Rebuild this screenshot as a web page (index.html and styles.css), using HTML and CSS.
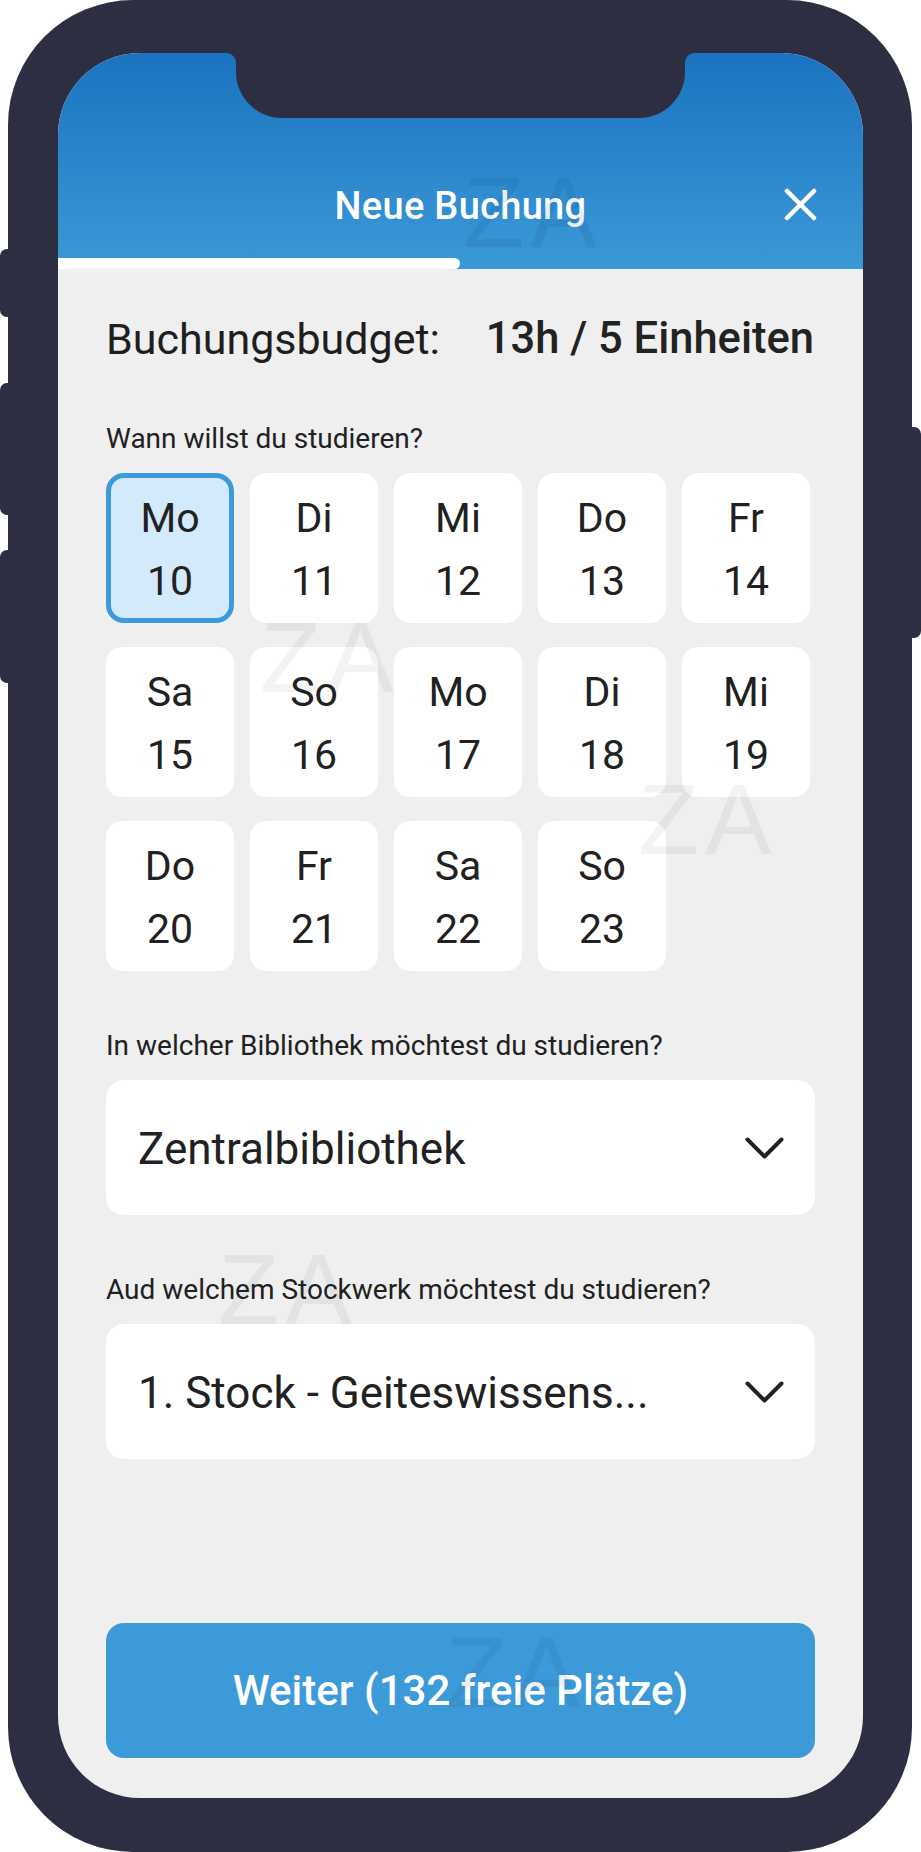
FILE: index.html
```html
<!DOCTYPE html>
<html lang="de">
<head>
<meta charset="utf-8">
<title>Neue Buchung</title>
<link rel="stylesheet" href="styles.css">
</head>
<body>
<div class="stage">
  <div class="device">
    <span class="side-btn side-left mute"></span>
    <span class="side-btn side-left vol-up"></span>
    <span class="side-btn side-left vol-down"></span>
    <span class="side-btn side-right power"></span>
    <div class="screen">
      <div class="notch"></div>
      <header class="header">
        <div class="title-row">
          <h1 class="title">Neue Buchung</h1>
          <svg class="close" viewBox="0 0 33 33" width="33" height="33" aria-label="Schließen">
            <path d="M3 3 L30 30 M30 3 L3 30" stroke="#fff" stroke-width="4.5" stroke-linecap="round" fill="none"/>
          </svg>
        </div>
        <div class="progress"></div>
      </header>
      <main class="content">
        <div class="budget">
          <span>Buchungsbudget:</span>
          <strong>13h / 5 Einheiten</strong>
        </div>
        <p class="label label-first">Wann willst du studieren?</p>
        <div class="days">
          <div class="day selected"><span>Mo</span><span>10</span></div>
          <div class="day"><span>Di</span><span>11</span></div>
          <div class="day"><span>Mi</span><span>12</span></div>
          <div class="day"><span>Do</span><span>13</span></div>
          <div class="day"><span>Fr</span><span>14</span></div>
          <div class="day"><span>Sa</span><span>15</span></div>
          <div class="day"><span>So</span><span>16</span></div>
          <div class="day"><span>Mo</span><span>17</span></div>
          <div class="day"><span>Di</span><span>18</span></div>
          <div class="day"><span>Mi</span><span>19</span></div>
          <div class="day"><span>Do</span><span>20</span></div>
          <div class="day"><span>Fr</span><span>21</span></div>
          <div class="day"><span>Sa</span><span>22</span></div>
          <div class="day"><span>So</span><span>23</span></div>
        </div>
        <p class="label">In welcher Bibliothek möchtest du studieren?</p>
        <div class="select">
          <span>Zentralbibliothek</span>
          <svg class="chevron" viewBox="0 0 39 22" width="39" height="22"><path d="M2.5 2.5 L19.5 19.5 L36.5 2.5" stroke="#222" stroke-width="4" stroke-linecap="round" stroke-linejoin="round" fill="none"/></svg>
        </div>
        <p class="label">Aud welchem Stockwerk möchtest du studieren?</p>
        <div class="select">
          <span>1. Stock - Geiteswissens...</span>
          <svg class="chevron" viewBox="0 0 39 22" width="39" height="22"><path d="M2.5 2.5 L19.5 19.5 L36.5 2.5" stroke="#222" stroke-width="4" stroke-linecap="round" stroke-linejoin="round" fill="none"/></svg>
        </div>
        <button class="cta" type="button">Weiter (132 freie Plätze)</button>
      </main>
      <div class="wm wm-1">ZA</div>
      <div class="wm wm-2">ZA</div>
      <div class="wm wm-3">ZA</div>
      <div class="wm wm-4">ZA</div>
      <div class="wm wm-5">ZA</div>
    </div>
  </div>
</div>
</body>
</html>
```

FILE: styles.css
```css
* { box-sizing: border-box; }

html, body {
  margin: 0;
  padding: 0;
  background: #ffffff;
}

body {
  font-family: Roboto, "Liberation Sans", Arial, sans-serif;
  color: #212121;
}

.stage {
  width: 921px;
  height: 1852px;
  padding-left: 8px;
}

.device {
  position: relative;
  width: 904px;
  height: 1852px;
  padding: 53px 49px 54px 50px;
  background: #2e2e42;
  border-radius: 125px;
}

.side-btn {
  position: absolute;
  width: 16px;
  background: #2e2e42;
}

.side-left {
  left: -8px;
  border-radius: 7px 0 0 7px;
}

.mute { top: 249px; height: 68px; }
.vol-up { top: 383px; height: 132px; }
.vol-down { top: 550px; height: 133px; }

.side-right {
  right: -9px;
  border-radius: 0 7px 7px 0;
}

.power { top: 427px; height: 211px; }

.screen {
  position: relative;
  height: 100%;
  border-radius: 82px;
  overflow: hidden;
  background: #efefef;
  display: flex;
  flex-direction: column;
}

.notch {
  position: absolute;
  top: 0;
  left: 178px;
  width: 449px;
  height: 65px;
  background: #2e2e42;
  border-radius: 0 0 46px 46px;
  z-index: 3;
}

.notch::before,
.notch::after {
  content: "";
  position: absolute;
  top: 0;
  width: 10px;
  height: 10px;
}

.notch::before {
  left: -10px;
  background: radial-gradient(circle at 0 100%, rgba(46,46,66,0) 9.5px, #2e2e42 10.5px);
}

.notch::after {
  right: -10px;
  background: radial-gradient(circle at 100% 100%, rgba(46,46,66,0) 9.5px, #2e2e42 10.5px);
}

/* Header */
.header {
  flex: none;
  height: 216px;
  background: linear-gradient(180deg, #1a73c0 0%, #3b99d7 100%);
  display: flex;
  flex-direction: column;
  justify-content: flex-end;
}

.title-row {
  display: grid;
  grid-template-columns: 1fr auto 1fr;
  align-items: center;
  height: 44px;
  margin-bottom: 30px;
}

.title {
  grid-column: 2;
  margin: 0;
  font-size: 38px;
  line-height: 44px;
  font-weight: 500;
  color: #ffffff;
  letter-spacing: 0.3px;
}

.close {
  grid-column: 3;
  justify-self: end;
  margin-right: 46px;
  margin-top: -3px;
  display: block;
}

.progress {
  width: 402px;
  height: 11px;
  background: #ffffff;
  border-radius: 0 6px 6px 0;
}

/* Content */
.content {
  flex: 1;
  display: flex;
  flex-direction: column;
  padding: 0 48px 40px;
}

.budget {
  margin-top: 45px;
  display: flex;
  justify-content: space-between;
  font-size: 43px;
  line-height: 50px;
  color: #1e1e1e;
}

.budget strong {
  font-weight: 500;
  font-size: 43.5px;
  margin-right: 1px;
  color: #222;
}

.label {
  margin: 58px 0 0;
  font-size: 28px;
  line-height: 34px;
  color: #212121;
}

.days {
  margin-top: 17px;
  display: grid;
  grid-template-columns: repeat(5, 128px);
  gap: 24px 16px;
}

.day {
  height: 150px;
  background: #ffffff;
  border-radius: 16px;
  display: flex;
  flex-direction: column;
  align-items: center;
  justify-content: center;
  padding-top: 4px;
  font-size: 41px;
  line-height: 63px;
  color: #212121;
}

.day.selected {
  background: #d3eafc;
  border: 5px solid #3d9ad8;
  border-radius: 18px;
}

.select {
  margin-top: 17px;
  height: 135px;
  background: #ffffff;
  border-radius: 18px;
  display: flex;
  align-items: center;
  justify-content: space-between;
  padding: 0 31px 0 32px;
  font-size: 44px;
  color: #212121;
}

.select span {
  padding-top: 3px;
}

.chevron {
  display: block;
  flex: none;
}

.cta {
  margin-top: auto;
  height: 135px;
  width: 100%;
  border: 0;
  background: #3d9ad8;
  border-radius: 18px;
  color: #ffffff;
  font-family: Roboto, "Liberation Sans", Arial, sans-serif;
  font-size: 42px;
  font-weight: 500;
  display: flex;
  align-items: center;
  justify-content: center;
  padding: 0;
}

/* Watermarks */
.wm {
  position: absolute;
  font-family: "Liberation Sans", Arial, sans-serif;
  font-size: 100px;
  line-height: 1;
  letter-spacing: 6px;
  color: rgba(20, 30, 60, 0.055);
  pointer-events: none;
  z-index: 2;
}

.wm-1 { left: 405px; top: 109px; color: rgba(10, 40, 90, 0.09); }
.wm-2 { left: 202px; top: 554px; }
.wm-3 { left: 580px; top: 716px; }
.wm-4 { left: 160px; top: 1186px; }
.wm-5 { left: 388px; top: 1569px; color: rgba(10, 40, 90, 0.07); }
```
